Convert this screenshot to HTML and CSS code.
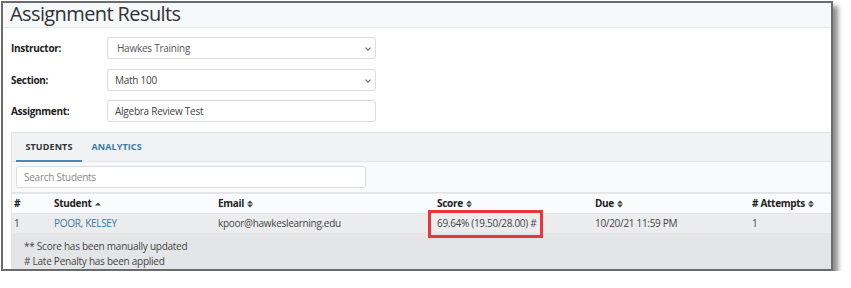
FILE: index.html
```html
<!DOCTYPE html>
<html lang="en">
<head>
    <meta charset="UTF-8">
    <meta name="viewport" content="width=device-width, initial-scale=1.0">
    <title>Assignment Results</title>
    <link rel="stylesheet" href="styles.css">
</head>
<body>
    <div class="frame">
        <div class="page-header">
            <h1>Assignment Results</h1>
        </div>
        <div class="filters">
            <div class="field">
                <label>Instructor:</label>
                <div class="select">Hawkes Training<span class="chev"></span></div>
            </div>
            <div class="field">
                <label>Section:</label>
                <div class="select dark">Math 100<span class="chev"></span></div>
            </div>
            <div class="field">
                <label>Assignment:</label>
                <div class="input">Algebra Review Test</div>
            </div>
        </div>
        <div class="panel">
            <div class="tabs">
                <div class="tab active">Students</div>
                <div class="tab">Analytics</div>
            </div>
            <div class="search-row">
                <div class="search">Search Students</div>
            </div>
            <table class="results">
                <thead>
                    <tr>
                        <th class="c-num">#</th>
                        <th class="c-student">Student <svg class="sort" width="6" height="8" viewBox="0 0 6 8"><path d="M0 5.5 L3 2.5 L6 5.5 Z"/></svg></th>
                        <th class="c-email">Email <svg class="sort" width="6" height="8" viewBox="0 0 6 8"><path d="M0 3.5 L3 0.5 L6 3.5 Z M0 4.5 L6 4.5 L3 7.5 Z"/></svg></th>
                        <th class="c-score">Score <svg class="sort" width="6" height="8" viewBox="0 0 6 8"><path d="M0 3.5 L3 0.5 L6 3.5 Z M0 4.5 L6 4.5 L3 7.5 Z"/></svg></th>
                        <th class="c-due">Due <svg class="sort" width="6" height="8" viewBox="0 0 6 8"><path d="M0 3.5 L3 0.5 L6 3.5 Z M0 4.5 L6 4.5 L3 7.5 Z"/></svg></th>
                        <th># Attempts <svg class="sort" width="6" height="8" viewBox="0 0 6 8"><path d="M0 3.5 L3 0.5 L6 3.5 Z M0 4.5 L6 4.5 L3 7.5 Z"/></svg></th>
                    </tr>
                </thead>
                <tbody>
                    <tr>
                        <td>1</td>
                        <td><a href="#">POOR, KELSEY</a></td>
                        <td>kpoor@hawkeslearning.edu</td>
                        <td><span class="highlight">69.64% (19.50/28.00) #</span></td>
                        <td>10/20/21 11:59 PM</td>
                        <td>1</td>
                    </tr>
                </tbody>
            </table>
            <div class="notes">
                <p>** Score has been manually updated</p>
                <p># Late Penalty has been applied</p>
            </div>
        </div>
    </div>
</body>
</html>
```

FILE: styles.css
```css
body {
    margin: 0;
    padding: 1px 0 0 1px;
    background: #fff;
    font-family: "Open Sans", Arial, sans-serif;
    color: #333;
}
.frame {
    width: 828px;
    height: 266px;
    border: 2px solid #6b6b6b;
    box-shadow: 5px 5px 5px rgba(0, 0, 0, 0.45);
    overflow: hidden;
    background: #fff;
}
.page-header {
    height: 24px;
    background: #f7f8fa;
    border-bottom: 1px solid #e6e8ec;
    padding-left: 7px;
}
h1 {
    margin: 0;
    font-size: 20px;
    font-weight: 400;
    letter-spacing: -0.6px;
    line-height: 22px;
    color: #333;
}
.filters {
    padding: 9px 0 0 8px;
}
.field {
    display: flex;
    align-items: center;
    height: 22px;
    margin-bottom: 9.5px;
}
.field label {
    width: 96px;
    font-size: 10px;
    font-weight: 700;
    letter-spacing: -0.3px;
    color: #222;
}
.select, .input {
    position: relative;
    box-sizing: border-box;
    width: 269px;
    height: 22px;
    border: 1px solid #dcdcdc;
    border-radius: 3px;
    font-size: 10px;
    letter-spacing: -0.25px;
    line-height: 20px;
    padding-left: 9px;
    color: #555;
    background: #fff;
}
.select.dark, .input {
    color: #444;
    padding-left: 7px;
}
.chev {
    position: absolute;
    right: 5px;
    top: 8px;
    width: 3px;
    height: 3px;
    border-right: 1px solid #666;
    border-bottom: 1px solid #666;
    transform: rotate(45deg);
}
.panel {
    margin: 9px 0 0 8px;
    background: #f1f2f4;
    border-top: 1px solid #e2e4e7;
    border-left: 1px solid #e2e4e7;
}
.tabs {
    display: flex;
    height: 28px;
    padding-left: 4px;
    border-bottom: 1px solid #e2e4e7;
}
.tab {
    font-size: 9px;
    font-weight: 700;
    text-transform: uppercase;
    letter-spacing: 0.1px;
    color: #3a7aa5;
    padding: 0 9.5px;
    line-height: 28px;
}
.tab.active {
    color: #333;
    border-bottom: 2px solid #4b87b3;
    height: 26px;
    padding-bottom: 1px;
}
.search-row {
    background: #f8f9fa;
    padding: 4px;
    border-bottom: 1px solid #e2e4e7;
}
.search {
    box-sizing: border-box;
    width: 350px;
    height: 22px;
    border: 1px solid #dcdcdc;
    border-radius: 3px;
    background: #fff;
    font-size: 10px;
    letter-spacing: -0.25px;
    line-height: 20px;
    padding-left: 7px;
    color: #888;
}
.results {
    width: 100%;
    border-collapse: collapse;
    font-size: 10px;
    letter-spacing: -0.3px;
}
.results th {
    text-align: left;
    font-weight: 700;
    color: #222;
    background: #fafbfc;
    height: 19px;
    padding: 0 0 0 2px;
    border-top: 1px solid #e6e7ea;
    border-bottom: 1px solid #e6e7ea;
}
.results td {
    background: #ececee;
    height: 19px;
    padding: 0 0 0 2px;
    color: #444;
}
.c-num { width: 38px; }
.c-student { width: 162px; }
.c-email { width: 217px; }
.c-score { width: 156px; }
.c-due { width: 155px; }
.sort {
    fill: #444;
    vertical-align: -1px;
    margin-left: 1px;
}
.results a {
    color: #3a7aa5;
    text-decoration: none;
}
.highlight {
    position: relative;
    display: inline-block;
    line-height: 19px;
}
.highlight::after {
    content: "";
    position: absolute;
    left: -9px;
    right: -7px;
    top: -4px;
    bottom: -5px;
    border: 3px solid #e8363c;
}
.notes {
    background: #e4e5e7;
    padding: 6px 0 0 12px;
    height: 40px;
    font-size: 10px;
    letter-spacing: -0.25px;
    color: #444;
}
.notes p {
    margin: 0;
    line-height: 15px;
}
```
